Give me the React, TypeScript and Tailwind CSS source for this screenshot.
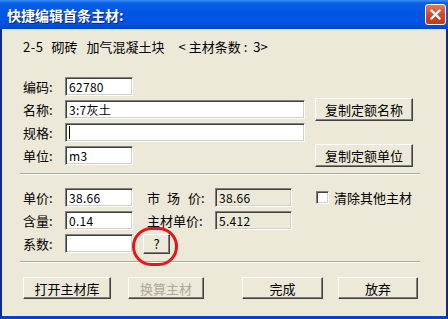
import React from "react";

const font = { fontFamily: '"Noto Sans CJK SC", "Noto Sans", sans-serif' };

function Field({ w, value, readOnly, cursor }: { w: string; value?: string; readOnly?: boolean; cursor?: boolean }) {
  return (
    <div
      className={`${w} h-[19px] flex items-center pl-[2px] border border-t-[#808080] border-l-[#808080] border-b-white border-r-white shadow-[inset_1px_1px_0_#404040,inset_-1px_-1px_0_#d4d0c8] text-[12px] leading-none text-black tracking-[0.3px] ${readOnly ? "bg-[#ece9d8]" : "bg-white"}`}
    >
      {cursor ? <span className="w-[1px] h-[13px] bg-black ml-[1px]" /> : <span className="pl-[1px]">{value}</span>}
    </div>
  );
}

function Btn({ w, h = "h-[23px]", children, disabled, extra = "" }: { w: string; h?: string; children: React.ReactNode; disabled?: boolean; extra?: string }) {
  return (
    <div
      className={`${w} ${h} ${extra} flex items-center justify-center bg-[#ece9d8] border border-t-white border-l-white border-b-[#404040] border-r-[#404040] shadow-[inset_-1px_-1px_0_#808080] text-[13px] leading-none ${disabled ? "text-[#aca899]" : "text-black"}`}
    >
      {children}
    </div>
  );
}

function Label({ w = "w-[42px]", children }: { w?: string; children: React.ReactNode }) {
  return <div className={`${w} text-[13px] leading-none text-black whitespace-nowrap flex items-center`}>{children}</div>;
}

function Sep() {
  return <div className="ml-[-3px] w-[400px] h-[2px] border-t border-t-[#aca899] border-b border-b-white" />;
}

export default function App() {
  return (
    <div className="w-[448px] h-[319px] flex flex-col bg-[#ece9d8] overflow-hidden" style={font}>
      {/* Title bar */}
      <div className="h-[29px] shrink-0 flex items-center justify-between pl-[7px] pr-[2px] bg-[linear-gradient(to_bottom,#3d8ff5_0%,#0a5fe8_10%,#0056e4_45%,#0052df_85%,#0040cc_100%)]">
        <div className="text-white font-bold text-[14px] leading-none [text-shadow:1px_1px_0_#0a1e7a]">快捷编辑首条主材:</div>
        <div className="w-[21px] h-[21px] rounded-[3px] border border-white bg-[linear-gradient(to_bottom,#e8785a,#d2492a_50%,#c23a1b)] flex items-center justify-center">
          <svg width="11" height="11" viewBox="0 0 11 11">
            <path d="M1.5 1.5 L9.5 9.5 M9.5 1.5 L1.5 9.5" stroke="white" strokeWidth="2.4" strokeLinecap="round" />
          </svg>
        </div>
      </div>

      {/* Body */}
      <div className="flex-1 flex flex-col border-l-2 border-r-2 border-l-[#0b2a8a] border-r-[#0b2a8a] border-b-[3px] border-b-[#0a3fd4] pl-[21px]">
        <div className="mt-[9px] h-[16px] flex items-center text-[13px] leading-none text-black whitespace-nowrap">
          <span className="tracking-[0.5px]">2-5</span>
          <span className="ml-[8px]">砌砖</span>
          <span className="ml-[9px]">加气混凝土块</span>
          <span className="ml-[14px]">&lt;</span>
          <span className="ml-[3px]">主材条数</span>
          <span className="ml-[3px]">:</span>
          <span className="ml-[6px]">3&gt;</span>
        </div>

        {/* Section 1 */}
        <div className="mt-[23px] flex flex-col gap-[4px]">
          <div className="flex items-center h-[19px]">
            <Label>编码:</Label>
            <Field w="w-[68px]" value="62780" />
          </div>
          <div className="flex items-center h-[19px]">
            <Label>名称:</Label>
            <Field w="w-[240px]" value="3:7灰土" />
            <Btn w="w-[98px]" extra="ml-[10px]">复制定额名称</Btn>
          </div>
          <div className="flex items-center h-[19px]">
            <Label>规格:</Label>
            <Field w="w-[240px]" cursor />
          </div>
          <div className="flex items-center h-[19px]">
            <Label>单位:</Label>
            <Field w="w-[68px]" value="m3" />
            <Btn w="w-[98px]" extra="ml-[182px]">复制定额单位</Btn>
          </div>
        </div>

        <div className="mt-[8px]">
          <Sep />
        </div>

        {/* Section 2 */}
        <div className="mt-[13px] flex flex-col gap-[4px]">
          <div className="flex items-center h-[19px]">
            <Label>单价:</Label>
            <Field w="w-[68px]" value="38.66" />
            <div className="ml-[14px]">
              <Label w="w-[68px]">
                <span>市</span>
                <span className="ml-[7px]">场</span>
                <span className="ml-[8px]">价:</span>
              </Label>
            </div>
            <Field w="w-[77px]" value="38.66" readOnly />
            <div className="ml-[24px] w-[13px] h-[13px] bg-white border border-t-[#808080] border-l-[#808080] border-b-white border-r-white shadow-[inset_1px_1px_0_#404040,inset_-1px_-1px_0_#d4d0c8]" />
            <div className="ml-[5px]">
              <Label w="w-auto">清除其他主材</Label>
            </div>
          </div>
          <div className="flex items-center h-[19px]">
            <Label>含量:</Label>
            <Field w="w-[68px]" value="0.14" />
            <div className="ml-[14px]">
              <Label w="w-[68px]">主材单价:</Label>
            </div>
            <Field w="w-[77px]" value="5.412" readOnly />
          </div>
          <div className="flex items-center h-[19px]">
            <Label>系数:</Label>
            <Field w="w-[68px]" />
            <div className="relative ml-[10px]">
              <Btn w="w-[27px]" h="h-[20px]" extra="text-[12px]">?</Btn>
              <div className="absolute left-[-11px] top-[-7px] w-[46px] h-[39px] rounded-full border-[3px] border-[#e8141a]" />
            </div>
          </div>
        </div>

        <div className="mt-[8px]">
          <Sep />
        </div>

        {/* Bottom buttons */}
        <div className="mt-[14px] flex items-center">
          <Btn w="w-[88px]" h="h-[22px]">打开主材库</Btn>
          <Btn w="w-[76px]" h="h-[22px]" extra="ml-[17px]" disabled>换算主材</Btn>
          <Btn w="w-[81px]" h="h-[22px]" extra="ml-[38px]">完成</Btn>
          <Btn w="w-[80px]" h="h-[22px]" extra="ml-[15px]">放弃</Btn>
        </div>
      </div>
    </div>
  );
}
